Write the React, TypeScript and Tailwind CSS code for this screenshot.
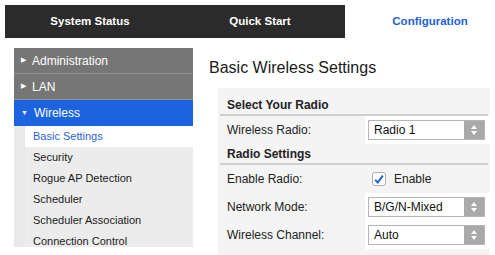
const tabs = [
  { label: "System Status", active: false },
  { label: "Quick Start", active: false },
  { label: "Configuration", active: true },
];

const subItems = [
  "Basic Settings",
  "Security",
  "Rogue AP Detection",
  "Scheduler",
  "Scheduler Association",
  "Connection Control",
];

function Stepper() {
  return (
    <div className="flex h-full w-[20px] items-center justify-center bg-[#a9a9a9]">
      <svg viewBox="0 0 8 12" className="h-[12px] w-[8px]">
        <path d="M4 1 L7 5 L1 5 Z" fill="#fff" />
        <path d="M4 11 L7 7 L1 7 Z" fill="#fff" />
      </svg>
    </div>
  );
}

function Select({ value }: { value: string }) {
  return (
    <div className="flex h-[20px] w-[117px] items-center border border-[#b5b5b5] bg-white">
      <span className="flex-1 pl-[5px] text-[12px] leading-[14px] text-[#111]">{value}</span>
      <Stepper />
    </div>
  );
}

function SectionHeader({ title, first }: { title: string; first?: boolean }) {
  return (
    <div
      className={`mx-[2px] border-b-2 border-[#cfcfcf] pb-[2px] pl-[7px] text-[12px] font-bold leading-[14px] text-[#222] ${
        first ? "pt-[10px]" : "pt-[3px]"
      }`}
    >
      {title}
    </div>
  );
}

function Row({ label, children, white }: { label: string; children: React.ReactNode; white?: boolean }) {
  return (
    <div className="flex h-[28px] items-center">
      <div className="w-[147px] pl-[9px] text-[12px] leading-[14px] text-[#222]">{label}</div>
      <div className={`flex h-full flex-1 items-center pl-[3px] ${white ? "bg-white" : ""}`}>{children}</div>
    </div>
  );
}

export default function App() {
  return (
    <div className="relative h-[255px] w-[495px] overflow-hidden bg-white font-['Liberation_Sans',Arial,sans-serif]">
      <div className="flex pl-[5px] pt-[5px]">
        {tabs.map((tab) => (
          <div
            key={tab.label}
            className={`flex h-[33px] w-[170px] shrink-0 items-center justify-center text-[11.5px] font-bold ${
              tab.active ? "bg-white text-[#1d62d6]" : "bg-[#2b2b2b] text-white"
            }`}
          >
            {tab.label}
          </div>
        ))}
      </div>

      <div className="mt-[10px] flex">
        <div className="ml-[14px] w-[179px] shrink-0">
          <div className="flex h-[26px] items-center border-b border-[#909090] bg-[#767676] pl-[7px] text-[12px] text-white">
            <span className="mr-[6px] text-[7px]">▶</span>Administration
          </div>
          <div className="flex h-[26px] items-center border-b border-[#909090] bg-[#767676] pl-[7px] text-[12px] text-white">
            <span className="mr-[6px] text-[7px]">▶</span>LAN
          </div>
          <div className="flex h-[26px] items-center bg-[#1b63df] pl-[7px] text-[12px] text-white">
            <span className="mr-[6px] text-[7px]">▼</span>Wireless
          </div>
          <div className="h-[121px] overflow-hidden border-l-[11px] border-[#e9e9e9] bg-[#ececec]">
            {subItems.map((item, i) => (
              <div
                key={item}
                className={`flex h-[21px] items-center pl-[8px] text-[11px] ${
                  i === 0 ? "bg-white text-[#2a62d8]" : "text-[#1a1a1a]"
                }`}
              >
                {item}
              </div>
            ))}
          </div>
        </div>

        <div className="flex-1 pl-[16px]">
          <h1 className="mt-[11px] text-[16px] leading-[18px] text-[#1a1a1a]">Basic Wireless Settings</h1>
          <div className="ml-[9px] mr-[5px] mt-[11px] h-[175px] bg-[#f4f4f4]">
            <SectionHeader title="Select Your Radio" first />
            <Row label="Wireless Radio:" white>
              <Select value="Radio 1" />
            </Row>
            <SectionHeader title="Radio Settings" />
            <Row label="Enable Radio:">
              <div className="ml-[4px] flex h-[14px] w-[14px] items-center justify-center rounded-[3px] border border-[#b0b0b0] bg-white">
                <svg viewBox="0 0 14 14" className="h-[13px] w-[13px]">
                  <path d="M2.5 7.5 L5.5 10.5 L11.5 2.5" fill="none" stroke="#1a5fd6" strokeWidth="2.2" />
                </svg>
              </div>
              <span className="ml-[8px] text-[12px] text-[#222]">Enable</span>
            </Row>
            <Row label="Network Mode:" white>
              <Select value="B/G/N-Mixed" />
            </Row>
            <Row label="Wireless Channel:" white>
              <Select value="Auto" />
            </Row>
          </div>
        </div>
      </div>
    </div>
  );
}
